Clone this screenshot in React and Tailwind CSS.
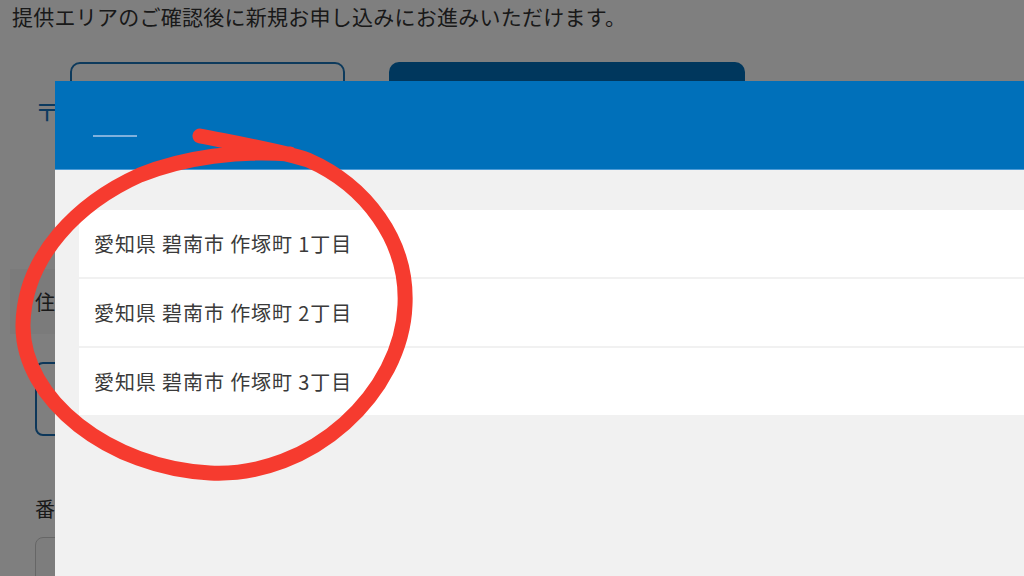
import React from 'react';

const ADDRESSES = [
  '愛知県 碧南市 作塚町 1丁目',
  '愛知県 碧南市 作塚町 2丁目',
  '愛知県 碧南市 作塚町 3丁目',
];

const FONT = { fontFamily: '"Noto Sans CJK JP", "Noto Sans", sans-serif' };

export default function App() {
  return (
    <div className="relative w-[1024px] h-[576px] overflow-hidden bg-white text-[#333]" style={FONT}>
      {/* page underneath */}
      <div className="flex flex-col">
        <p className="pl-[12px] pt-[1px] text-[21px] leading-[30px] tracking-[0.25px]">
          提供エリアのご確認後に新規お申し込みにお進みいただけます。
        </p>
        <div className="flex items-start pl-[35px] mt-[31px] gap-[19px]">
          <span className="w-[16px] mt-[34px] text-[24px] leading-[30px] text-[#1674be] overflow-visible">〒</span>
          <div className="flex gap-[44px]">
            <div className="w-[275px] h-[60px] rounded-[10px] border-2 border-[#1a74b8] bg-white" />
            <div className="w-[356px] h-[60px] rounded-[10px] bg-[#006eba]" />
          </div>
        </div>
        <div className="ml-[10px] mt-[143px] h-[65px] bg-[#f6f6f6] flex items-center pl-[25px]">
          <span className="text-[20px]">住所</span>
        </div>
        <div className="ml-[35px] mt-[28px] w-[400px] h-[74px] rounded-[8px] border-2 border-[#1a6fb5] bg-white" />
        <span className="ml-[35px] mt-[61px] text-[20px] leading-[24px]">番地</span>
        <div className="ml-[35px] mt-[16px] w-[400px] h-[60px] rounded-[8px] border border-[#ccc] bg-[#fafafa]" />
      </div>

      {/* overlay */}
      <div className="absolute inset-0 bg-black/50" />

      {/* modal */}
      <div className="absolute left-[55px] top-[81px] right-[-40px] bottom-[-40px] bg-[#f1f1f1] flex flex-col">
        <div className="h-[89px] bg-[#0070ba] border-b border-[#4d9bd6] pl-[38px] pt-[54px] shrink-0">
          <div className="w-[44px] h-[2px] bg-[#7fb1dd]" />
        </div>
        <ul className="mt-[40px] ml-[24px] flex flex-col gap-[2px]">
          {ADDRESSES.map((a) => (
            <li key={a} className="h-[67px] bg-white flex items-center pl-[15px] text-[20px] tracking-[0.9px] text-[#3a3a3a]">
              {a}
            </li>
          ))}
        </ul>
      </div>

      {/* hand-drawn red circle */}
      <svg className="absolute inset-0 pointer-events-none" width="1024" height="576" viewBox="0 0 1024 576">
        <path
          d="M 200 136 C 240 144, 285 152, 308 160 C 365 185, 408 240, 405 305 C 402 392, 312 478, 210 473 C 110 468, 22 400, 23 325 C 24 255, 80 202, 140 175 C 185 157, 240 150, 290 154"
          fill="none"
          stroke="#f63b2f"
          strokeWidth="15"
          strokeLinecap="round"
          strokeLinejoin="round"
        />
      </svg>
    </div>
  );
}
